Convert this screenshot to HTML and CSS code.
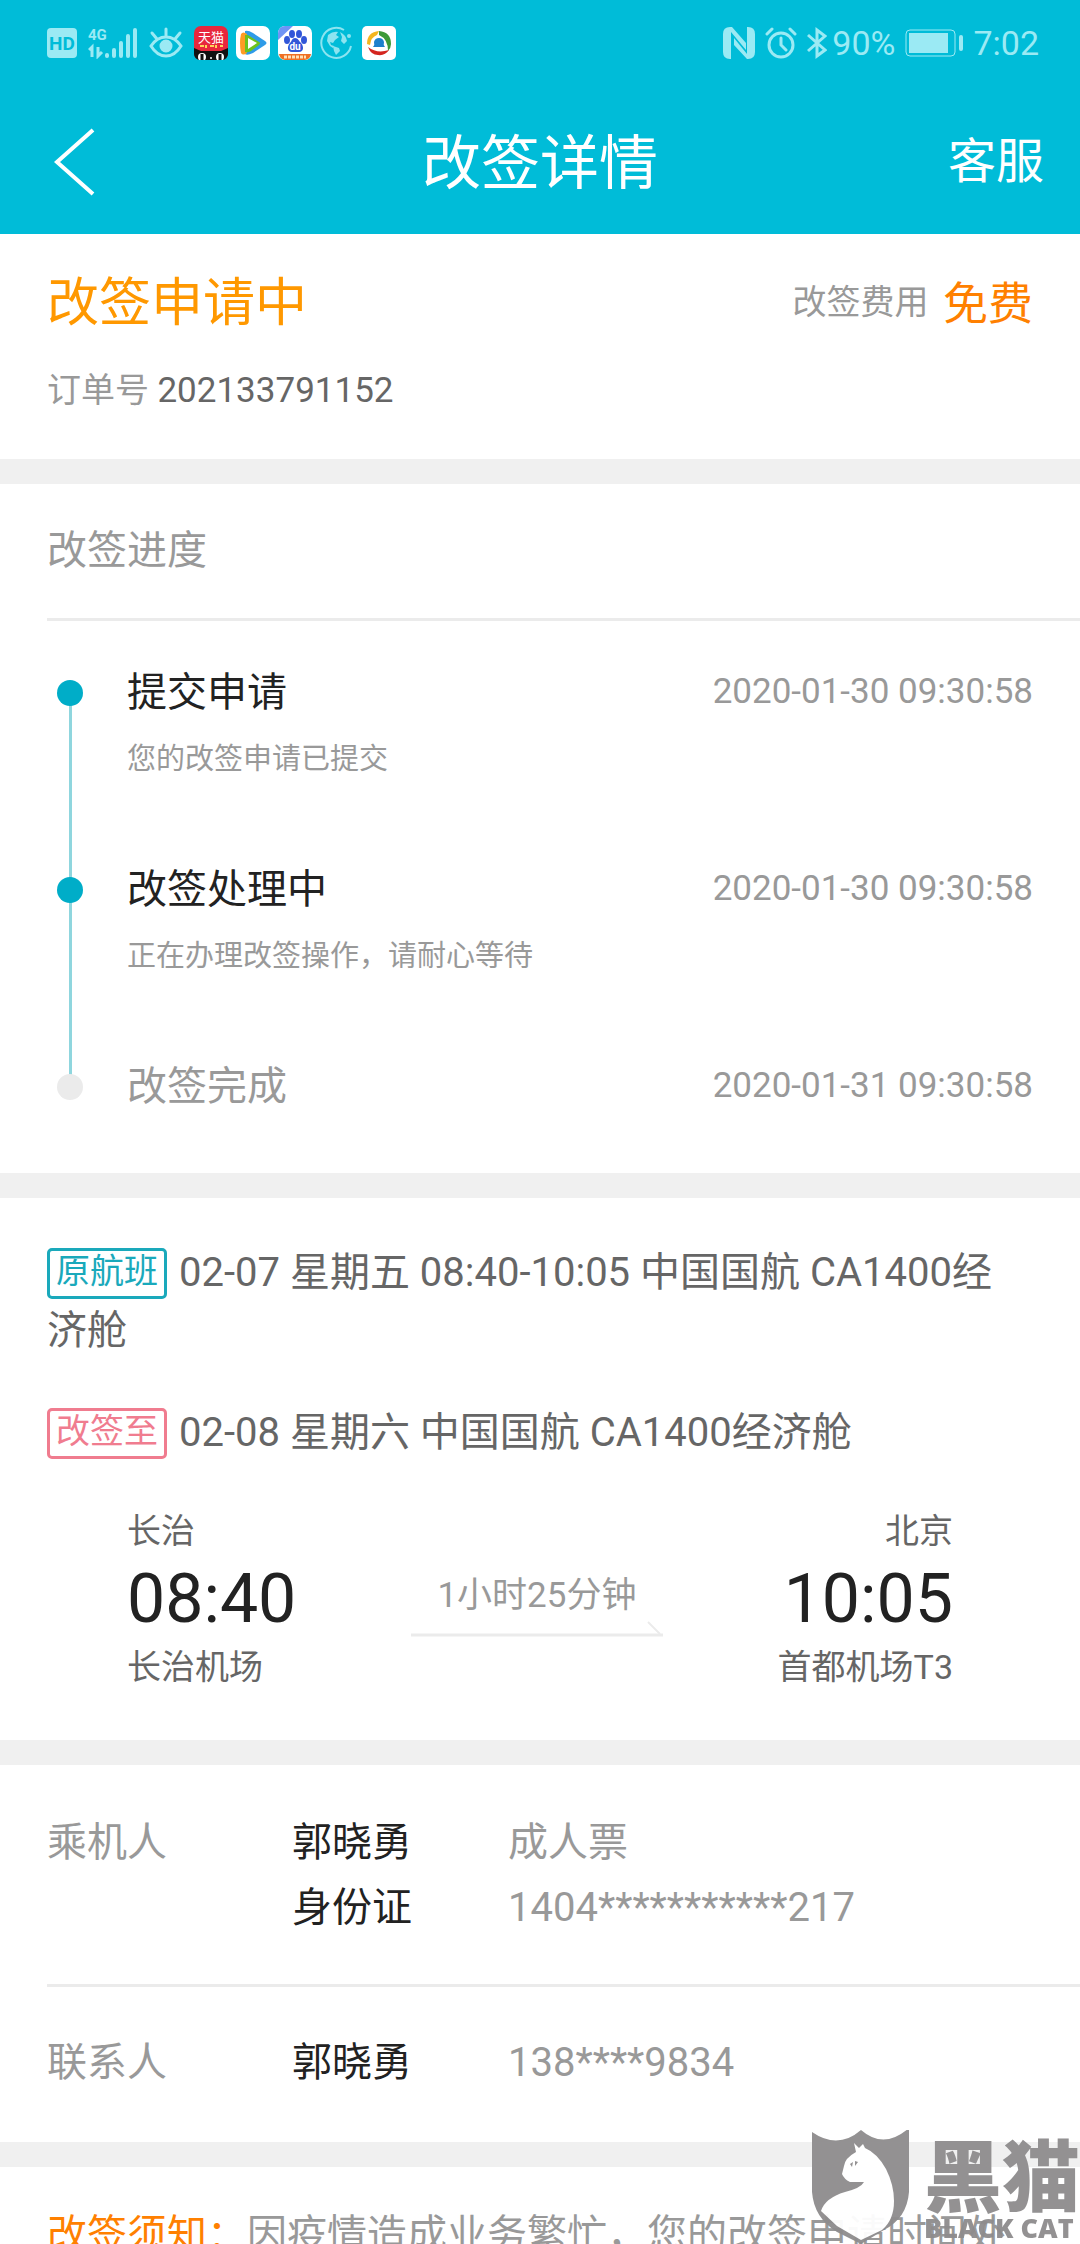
FILE: index.html
```
<!DOCTYPE html>
<html lang="zh-CN">
<head>
  <meta charset="UTF-8" />
  <meta name="viewport" content="width=device-width, initial-scale=1.0"/>
  <title>改签详情</title>
  <link rel="stylesheet" href="styles.css">
</head>
<body>
  <header>
    <div class="status-bar">
      <div class="status-left">
        <svg class="icon-hd" width="30" height="30" viewBox="0 0 30 30">
          <rect width="30" height="30" rx="4" fill="#9beaf4"/>
          <text x="15" y="22" font-size="19" font-weight="700" text-anchor="middle" fill="#00bcd8">HD</text>
        </svg>
        <svg class="icon-signal" width="50" height="32" viewBox="0 0 50 32">
          <text x="0" y="13" font-size="15" font-weight="700" fill="#9beaf4">4G</text>
          <path d="M1 23l3-3v10M10 20v9l4-4" fill="none" stroke="#9beaf4" stroke-width="3"/>
          <path d="M19 28v1M26 23v6M33 16v13M40 9v20M47 3v26" fill="none" stroke="#9beaf4" stroke-width="4" stroke-linecap="round"/>
        </svg>
        <svg class="icon-eye" width="34" height="32" viewBox="0 0 34 32" fill="none" stroke="#9beaf4" stroke-width="3" stroke-linecap="round">
          <path d="M2 19Q8 10 17 10T32 19Q26 29 17 29T2 19zM17 9V2M8 12L3 6M26 12l5-6"/>
          <circle cx="17" cy="19" r="5" fill="#9beaf4"/>
        </svg>
        <svg class="app-icon" width="34" height="34" viewBox="0 0 34 34">
          <rect width="34" height="34" rx="7" fill="#e8273d"/>
          <text x="17" y="16" font-size="13" text-anchor="middle" fill="#fff">天猫</text>
          <path d="M6 20h4M12 19v3M16 20h4M22 19v3M26 20h3" stroke="#ffd35a" stroke-width="2"/>
          <path d="M0 22l7 3h20l7-3v6a6 6 0 0 1-6 6H6a6 6 0 0 1-6-6z" fill="#111"/>
          <ellipse cx="8" cy="31" rx="4" ry="4" fill="#fff"/><ellipse cx="26" cy="31" rx="4" ry="4" fill="#fff"/>
          <path d="M8 28v6M26 28v6" stroke="#111" stroke-width="3"/>
          <circle cx="17" cy="32" r="1" fill="#fff"/>
        </svg>
        <svg class="app-icon" width="34" height="34" viewBox="0 0 34 34">
          <rect width="34" height="34" rx="7" fill="#fff"/>
          <path d="M9 5q3-1 8 2l12 8q3 2 0 4l-12 8q-6 3-8 1z" fill="#2e9be8"/>
          <path d="M5 8q2-3 6 0v19q-4 3-6 0Q3 17 5 8z" fill="#ff9b22"/>
          <path d="M9 9q2-1 6 2l8 5q2 1 0 3l-8 6q-4 2-6 1z" fill="#6cc21c"/>
          <path d="M12 12l9 5-9 6z" fill="#fff"/>
        </svg>
        <svg class="app-icon" width="34" height="34" viewBox="0 0 34 34">
          <rect width="34" height="34" rx="7" fill="#fff"/>
          <path d="M7 0h8L0 14V7a7 7 0 0 1 7-7z" fill="#6f94f5"/>
          <g fill="#3156d8">
            <ellipse cx="9" cy="14" rx="3" ry="4"/><ellipse cx="14" cy="8" rx="3" ry="4"/>
            <ellipse cx="21" cy="8" rx="3" ry="4"/><ellipse cx="26" cy="14" rx="3" ry="4"/>
            <path d="M17 12c3 0 4 3 6 5 3 3 3 9-2 9h-7c-5 0-5-6-2-9 2-2 2-5 5-5z"/>
          </g>
          <text x="17" y="24" font-size="10" font-weight="700" text-anchor="middle" fill="#fff">du</text>
          <path d="M1 28h32a7 7 0 0 1-6 6H7a7 7 0 0 1-6-6z" fill="#ee6f24"/>
          <path d="M6 31h22" stroke="#ffe0b8" stroke-width="3" stroke-dasharray="3 1"/>
        </svg>
        <svg class="app-icon" width="34" height="34" viewBox="0 0 34 34">
          <path d="M24 4A15 15 0 1 0 31 20" fill="none" stroke="#8ce4f0" stroke-width="2"/>
          <circle cx="29" cy="10" r="2" fill="#8ce4f0"/>
          <path d="M8 9q5-4 10-3l-2 3 3 2-4 3-2 3-3-1 1 3 3 1-1 2-3-2-3-5z" fill="#8ce4f0"/>
          <path d="M20 6q6 3 7 9l-3 3-3-3 1-4zM13 20l6 2 1 3-4 4-2-4z" fill="#8ce4f0"/>
        </svg>
        <svg class="app-icon" width="34" height="34" viewBox="0 0 34 34">
          <rect width="34" height="34" rx="5" fill="#fff"/>
          <path d="M5 18Q5 6 17 5L15 9Q9 11 8 19z" fill="#f4b51e"/>
          <path d="M17 5q12 1 12 13 0 4-3 7 0-12-9-16z" fill="#3d9a38"/>
          <path d="M27 24Q23 30 16 29 9 29 6 21q9 7 21 3z" fill="#d4251f"/>
          <path d="M11 21q2-2 1-5 1-4 5-4t5 4q-1 3 1 5z" fill="#1c80cc"/>
        </svg>
      </div>
      <div class="status-right">
        <svg class="icon-nfc" width="32" height="32" viewBox="0 0 32 32" fill="#9beaf4">
          <path d="M7 0Q0 0 0 7v18q0 7 7 7h1V5L23 23v-7L9 0z"/>
          <path d="M25 32q7 0 7-7V7q0-7-7-7h-1v27L11 11v7l13 14z"/>
        </svg>
        <svg class="icon-alarm" width="32" height="32" viewBox="0 0 32 32" fill="none" stroke="#9beaf4" stroke-width="3" stroke-linecap="round">
          <circle cx="16" cy="18" r="12"/>
          <path d="M16 11v7l5 5M2 7l5-5M30 7l-5-5"/>
        </svg>
        <svg class="icon-bt" width="20" height="32" viewBox="0 0 20 32" fill="none" stroke="#9beaf4" stroke-width="3">
          <path d="M1 8l17 15-8 6V3l8 6L1 24"/>
        </svg>
        <span class="battery-text">90%</span>
        <svg class="icon-battery" width="58" height="28" viewBox="0 0 58 28">
          <rect x="1" y="1" width="49" height="26" rx="4" fill="none" stroke="#9beaf4" stroke-width="1"/>
          <rect x="4" y="4" width="39" height="20" fill="#9beaf4"/>
          <rect x="54" y="6" width="4" height="16" rx="2" fill="#9beaf4"/>
        </svg>
        <span>7:02</span>
      </div>
    </div>
    <nav class="nav-bar">
      <button type="button" class="back-btn" aria-label="返回">
        <svg width="42" height="68" viewBox="0 0 42 68" fill="none" stroke="#fff" stroke-width="4">
          <path d="M39 2L3 34l36 32"/>
        </svg>
      </button>
      <h1>改签详情</h1>
      <a href="#service" class="service-link">客服</a>
    </nav>
  </header>

  <main>
    <section class="block summary">
      <div class="summary-top">
        <h2>改签申请中</h2>
        <p class="fee">改签费用 <strong>免费</strong></p>
      </div>
      <p class="order-no">订单号 <span>202133791152</span></p>
    </section>

    <section class="block progress">
      <h3>改签进度</h3>
      <ol class="steps">
        <li class="step">
          <div class="step-text">
            <h4>提交申请</h4>
            <p>您的改签申请已提交</p>
          </div>
          <time>2020-01-30 09:30:58</time>
        </li>
        <li class="step">
          <div class="step-text">
            <h4>改签处理中</h4>
            <p>正在办理改签操作，请耐心等待</p>
          </div>
          <time>2020-01-30 09:30:58</time>
        </li>
        <li class="step pending">
          <div class="step-text">
            <h4>改签完成</h4>
          </div>
          <time>2020-01-31 09:30:58</time>
        </li>
      </ol>
    </section>

    <section class="block flights">
      <p class="flight"><span class="tag tag-old">原航班</span>02-07 星期五 08:40-10:05 中国国航 CA1400经济舱</p>
      <p class="flight"><span class="tag tag-new">改签至</span>02-08 星期六 中国国航 CA1400经济舱</p>
      <div class="route">
        <div class="place">
          <p>长治</p>
          <p class="clock">08:40</p>
          <p>长治机场</p>
        </div>
        <div class="duration">
          <p>1小时25分钟</p>
          <svg width="252" height="16" viewBox="0 0 252 16" fill="none" stroke="#ebebeb" stroke-width="3">
            <path d="M0 14h252"/>
            <path d="M237 1l12 12" stroke-width="2"/>
          </svg>
        </div>
        <div class="place arrive">
          <p>北京</p>
          <p class="clock">10:05</p>
          <p>首都机场T3</p>
        </div>
      </div>
    </section>

    <section class="block people">
      <dl class="person">
        <dt>乘机人</dt>
        <dd class="name">郭晓勇</dd>
        <dd>成人票</dd>
        <dd class="name id-type">身份证</dd>
        <dd>1404***********217</dd>
      </dl>
      <dl class="person">
        <dt>联系人</dt>
        <dd class="name">郭晓勇</dd>
        <dd>138****9834</dd>
      </dl>
    </section>

    <section class="block notice">
      <p><strong>改签须知：</strong>因疫情造成业务繁忙，您的改签申请时间处</p>
    </section>
  </main>

  <div class="watermark">
    <svg width="98" height="114" viewBox="0 0 98 114">
      <path d="M0 2Q26 20 49 0q23 20 48-2v64q-2 26-25 38L49 114 25 102Q2 88 0 62z" fill="#8e8c8d"/>
      <path d="M42 13l5 5 4-4 2 4q12 5 21 21 8 16 8 32 0 19-12 29L49 110 25 96 9 81q4-13 24-19 16-4 19-10H38q-6-3-8-8l2-8q1-8 12-14z" fill="#fff"/>
      <path d="M38 34l3-2-1 5zM43 31l3 1-3 4z" fill="#8e8c8d"/>
    </svg>
    <div class="watermark-text">
      <span class="watermark-cn">黑猫</span>
      <span class="watermark-en">BLACK CAT</span>
    </div>
  </div>
</body>
</html>
```
FILE: styles.css
```
* {
  box-sizing: border-box;
  margin: 0;
  padding: 0;
}
body {
  display: flex;
  flex-direction: column;
  height: 100vh;
  overflow: hidden;
  background: #fff;
  color: #666;
  font-family: Roboto, "Noto Sans CJK SC", sans-serif;
  font-size: 40px;
  line-height: 58px;
}
h1, h2, h3, h4, strong {
  font-weight: 400;
}

/* header */
header {
  background: #00bcd8;
  color: #fff;
}
.status-bar {
  display: flex;
  justify-content: space-between;
  align-items: center;
  height: 86px;
  padding: 0 41px 0 47px;
  color: #9beaf4;
  font-size: 34px;
}
.status-left, .status-right {
  display: flex;
  align-items: center;
}
.status-left {
  gap: 8px;
}
.icon-hd, .icon-signal, .icon-eye {
  margin-right: 3px;
}
.icon-alarm, .icon-battery {
  margin: 0 10px;
}
.battery-text {
  margin-left: 5px;
}
.nav-bar {
  display: grid;
  grid-template-columns: 1fr auto 1fr;
  align-items: center;
  height: 148px;
  padding: 4px 36px 0;
}
.back-btn {
  display: flex;
  justify-self: start;
  padding-left: 18px;
  border: none;
  background: none;
  cursor: pointer;
}
h1 {
  padding-top: 4px;
  font-size: 59px;
}
.service-link {
  justify-self: end;
  color: #fff;
  font-size: 48px;
  text-decoration: none;
}

/* content blocks */
main {
  flex: 1;
  overflow-y: auto;
  scrollbar-width: none;
}
.block {
  padding: 39px 47px;
  border-bottom: 25px solid #f0f0f0;
}
.summary-top {
  display: flex;
  justify-content: space-between;
  align-items: center;
}
h2 {
  color: #ff9800;
  font-size: 52px;
}
.fee, .order-no {
  color: #999;
  font-size: 34px;
}
.fee strong {
  margin-left: 6px;
  color: #ff8000;
  font-size: 45px;
  vertical-align: middle;
}
.order-no {
  margin-top: 27px;
}
.order-no span {
  color: #666;
  font-size: 35px;
}

/* progress */
.progress {
  padding-top: 38px;
  padding-right: 0;
}
h3 {
  padding-bottom: 38px;
  border-bottom: 3px solid #ebebeb;
  color: #999;
  font-size: 40px;
}
.steps {
  padding: 43px 47px 18px 0;
  list-style: none;
}
.step {
  position: relative;
  display: flex;
  justify-content: space-between;
  min-height: 197px;
  padding-left: 80px;
}
.step::before {
  content: "";
  position: absolute;
  z-index: 1;
  top: 16px;
  left: 10px;
  width: 26px;
  height: 26px;
  border-radius: 50%;
  background: #00adc8;
}
.step::after {
  content: "";
  position: absolute;
  top: 29px;
  left: 22px;
  width: 3px;
  height: 100%;
  background: #8fd6de;
}
.step h4 {
  color: #222;
  font-size: 40px;
}
.step p {
  margin-top: 8px;
  color: #999;
  font-size: 29px;
}
.step time {
  color: #999;
  font-size: 35px;
  line-height: 56px;
}
.step.pending {
  min-height: 58px;
}
.step.pending::before {
  background: #ebebeb;
}
.step.pending::after {
  display: none;
}
.step.pending h4 {
  color: #999;
}

/* flights */
.flights {
  padding-top: 46px;
  padding-bottom: 44px;
}
.flight {
  margin-bottom: 44px;
  padding-right: 20px;
}
.flight + .flight {
  margin-bottom: 40px;
}
.tag {
  display: inline-block;
  margin-right: 12px;
  padding: 0 6px 4px;
  border: 3px solid;
  border-radius: 5px;
  font-size: 34px;
  line-height: 41px;
  vertical-align: 3px;
}
.tag-old {
  color: #1aa9bb;
}
.tag-new {
  color: #f07c8f;
}
.route {
  display: flex;
  justify-content: space-between;
  align-items: center;
  padding: 0 80px;
  font-size: 34px;
}
.clock {
  color: #222;
  font-size: 68px;
  line-height: 78px;
}
.arrive {
  text-align: right;
}
.duration {
  padding-top: 10px;
  color: #999;
  font-size: 35px;
  line-height: 50px;
  text-align: center;
}
.duration svg {
  display: block;
}

/* passenger and contact */
.people {
  padding: 0 0 0 47px;
}
.person {
  display: grid;
  grid-template-columns: 245px 216px 1fr;
  row-gap: 7px;
  padding: 49px 0 47px;
  color: #999;
}
.person + .person {
  padding: 47px 0 50px;
  border-top: 3px solid #ebebeb;
}
.name {
  color: #222;
}
.id-type {
  grid-column: 2;
}
.notice {
  color: #999;
}
.notice strong {
  color: #ff8000;
}

.watermark {
  position: fixed;
  right: 0;
  bottom: 0;
  display: flex;
  align-items: flex-end;
  gap: 14px;
  color: #8e8c8d;
  opacity: 0.95;
}
.watermark-text {
  display: flex;
  flex-direction: column;
}
.watermark-cn {
  font-family: "Noto Sans CJK SC", sans-serif;
  font-size: 78px;
  font-weight: 900;
  line-height: 80px;
}
.watermark-en {
  font-family: "Open Sans", sans-serif;
  font-size: 27px;
  font-weight: 800;
  line-height: 32px;
}
```
